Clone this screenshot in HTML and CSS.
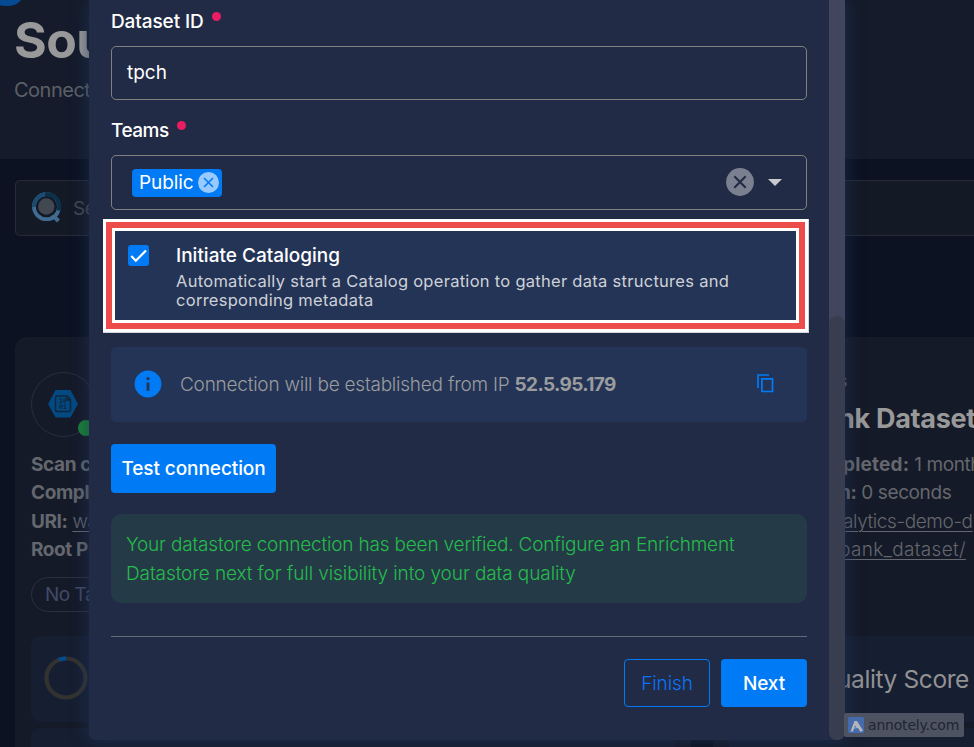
FILE: index.html
```html
<!DOCTYPE html>
<html lang="en">
<head>
<meta charset="utf-8">
<title>Add Datastore</title>
<link rel="stylesheet" href="styles.css">
</head>
<body>
<div class="page">
  <header class="page-header">
    <div class="top-pill"></div>
    <h1>Sou</h1>
    <p class="lead">Connect</p>
  </header>
  <div class="search">
    <svg width="32" height="34" viewBox="0 0 32 34" fill="none">
      <circle cx="14.300" cy="15.500" r="8.200" fill="#414852"/>
      <circle cx="14.500" cy="15.700" r="12.500" stroke="#416b91" stroke-width="3.800"/>
      <path d="M13 3.300A12.500 12.500 0 0 1 26.600 19.500" stroke="#0b3049" stroke-width="4"/>
      <path d="M2 16A12.500 12.500 0 0 1 13 3.300" stroke="#1c4b70" stroke-width="4"/>
      <path d="M19 27l3.500-1 4 4" stroke="#416b91" stroke-width="4"/>
    </svg>
    <span>Se</span>
  </div>
  <main class="cards">
    <article class="card">
      <div class="avatar">
        <svg width="30" height="28" viewBox="0 0 30 28">
          <path d="M7.500 0h15L30 14l-7.500 13.500h-15L0 14z" fill="#034a82"/>
          <path d="M9 6h10l3.500 3.500V19.500q0 2-2 2h-11.500q-1.500 0-1.500-2v-12q0-1.500 1.500-1.500zM19 6v4h4" fill="none" stroke="#12253c" stroke-width="1.400"/>
          <text x="15" y="13.400" class="bits">10</text>
          <text x="15" y="19.300" class="bits">01</text>
        </svg>
        <i class="status"></i>
      </div>
      <div class="facts">
        <div><b>Scan c</b></div>
        <div><b>Compl</b></div>
        <div><b>URI:</b> <u>wa</u></div>
        <div><b>Root P</b></div>
      </div>
      <span class="tag">No Ta</span>
      <div class="stat">
        <svg width="44" height="44" viewBox="0 0 44 44" fill="none">
          <circle cx="22" cy="22" r="19.500" stroke="#323230" stroke-width="4.200"/>
          <path d="M15 3.800A19.500 19.500 0 0 1 22 2.500" stroke="#024b91" stroke-width="4.200"/>
        </svg>
      </div>
      <div class="stat"></div>
    </article>
    <article class="card card-right">
      <div class="kicker">s</div>
      <h2>nk Dataset</h2>
      <div class="facts">
        <div class="f1"><b>pleted:</b> 1 month</div>
        <div class="f2"><b>n:</b> 0 seconds</div>
        <div class="f3"><u>alytics-demo-d</u></div>
        <div class="f4"><u>bank_dataset/</u></div>
      </div>
      <div class="stat score"><span>uality Score</span></div>
      <div class="stat"></div>
    </article>
  </main>
</div>

<div class="modal">
  <form class="modal-body">
    <label class="l1">Dataset ID<i class="req"></i></label>
    <div class="field">tpch</div>
    <label class="l2">Teams<i class="req"></i></label>
    <div class="field select">
      <span class="chip"><span>Public</span>
        <svg width="21" height="21" viewBox="0 0 21 21"><circle cx="10.500" cy="10.500" r="10.500" fill="#99caff"/><path d="M6 6l9 9M15 6l-9 9" stroke="#007bf5" stroke-width="1.600"/></svg>
      </span>
      <svg class="clear" width="28" height="28" viewBox="0 0 28 28"><circle cx="14" cy="14" r="13.900" fill="#7b8091"/><path d="M8.300 8.300l11.400 11.400M19.700 8.300L8.300 19.700" stroke="#222b45" stroke-width="2.100"/></svg>
      <svg class="caret" width="14" height="7" viewBox="0 0 14 7"><path d="M0 0h14L7 7z" fill="#c8cad0"/></svg>
    </div>
    <div class="callout">
      <div class="callout-in">
        <svg width="21" height="21" viewBox="0 0 21 21"><rect width="21" height="21" rx="3" fill="#007bf5"/><path d="M3.300 11l4.500 4.700L18 5.500" fill="none" stroke="#fff" stroke-width="2.200"/></svg>
        <div>
          <div class="opt-title">Initiate Cataloging</div>
          <div class="opt-text">Automatically start a Catalog operation to gather data structures and<br>corresponding metadata</div>
        </div>
      </div>
    </div>
    <div class="info">
      <svg width="28" height="28" viewBox="0 0 28 28"><circle cx="14" cy="14" r="13.400" fill="#007bf5"/><path d="M12.600 7.200h2.800v2.700h-2.800zM12.600 12.500h2.800v8.300h-2.800z" fill="#243456"/></svg>
      <span class="info-text">Connection will be established from IP <b>52.5.95.179</b></span>
      <svg class="copy" width="17" height="19" viewBox="0 0 17 19" fill="none" stroke="#007bf5" stroke-width="1.700"><path d="M12 1H1v13"/><path d="M4.900 4.800h10.600v12.700H4.900z"/></svg>
    </div>
    <button type="button" class="btn test">Test connection</button>
    <div class="success">Your datastore connection has been verified. Configure an Enrichment<br><span class="s2">Datastore next for full visibility into your data quality</span></div>
    <footer>
      <button type="button" class="btn outline">Finish</button>
      <button type="button" class="btn next">Next</button>
    </footer>
  </form>
  <div class="track"><div class="thumb"></div></div>
</div>

<div class="badge">
  <svg width="16" height="16" viewBox="0 0 16 16"><rect width="16" height="16" rx="1.500" fill="#456bac"/><path d="M2.500 14.500L6.500 4h2.500l6 9.500-2.500 1.500-2.500-4-4 .500-1 3z" fill="#b3b5bb"/><path d="M7 8.500l1.500 2-2 .300z" fill="#456bac"/></svg>
  <span>annotely.com</span>
</div>
</body>
</html>
```
FILE: styles.css
```css
* { box-sizing: border-box; }
html, body { height: 100%; }
body {
  margin: 0;
  overflow: hidden;
  position: relative;
  background: #0c1221;
  font-family: Inter, "Liberation Sans", sans-serif;
  font-size: 19px;
  color: #fff;
}
svg { display: block; flex: none; }
h1, h2, p { margin: 0; }

.page { width: 974px; height: 747px; overflow: hidden; }
.page-header { position: relative; height: 159px; padding: 10px 14px; background: #151b2a; }
.top-pill { position: absolute; left: -10px; top: -24px; width: 34px; height: 30px; border-radius: 15px; background: #034a93; }
h1 { font-size: 50px; line-height: 60px; font-weight: 700; color: #999; letter-spacing: -0.6px; }
.lead { margin-top: 9px; font-size: 20px; line-height: 22px; color: #5d6067; letter-spacing: -0.5px; }
.search {
  display: flex; align-items: center; gap: 9px;
  height: 56px; margin: 21px 0 0 15px; padding-left: 16px;
  border: 1px solid #252a36; border-right: 0; border-radius: 5px 0 0 5px;
  background: #141926; color: #45484f; letter-spacing: -0.5px;
}
.cards { display: grid; grid-template-columns: 676px 1fr; gap: 22px; margin: 101px 0 0 15px; }
.card { height: 500px; padding: 35px 16px 0 16px; border-radius: 12px; background: #151a28; }
.card-right { padding-right: 0; overflow: hidden; border-radius: 12px 0 0 12px; }
.avatar {
  position: relative; display: flex; align-items: center; justify-content: center;
  width: 65px; height: 65px; padding: 0 2px 1px 0; border: 1px solid #2a2f3c; border-radius: 50%;
}
.bits { font: 700 6.500px "Liberation Mono", monospace; fill: #12253c; text-anchor: middle; }
.status { position: absolute; left: 46px; top: 47px; width: 16px; height: 16px; border-radius: 50%; background: #1a8036; }
.facts { margin-top: 14px; color: #64676d; line-height: 28.400px; white-space: nowrap; letter-spacing: -0.4px; }
.facts b { font-weight: 700; }
.facts u { font-weight: 300; text-underline-offset: 3px; text-decoration-thickness: 1px; }
.tag {
  display: block; width: 100px; height: 35px; margin-top: 12px; padding-left: 13px;
  border: 1px solid #2a3040; border-radius: 18px;
  color: #424a66; font-size: 19px; line-height: 33px; letter-spacing: -0.5px;
}
.stat { height: 86px; margin: 0 0 6px; padding: 20px 0 0 13px; border-radius: 10px; background: #161e31; }
.card-right .stat { border-radius: 10px 0 0 10px; }
.tag + .stat { margin-top: 24px; }
.kicker { height: 24px; margin-top: -6px; padding-left: 109px; line-height: 30px; color: #64676d; font-size: 18px; }
.card-right h2 { margin: 10px 0 0 109px; height: 38px; line-height: 38px; font-size: 27px; font-weight: 700; color: #999; white-space: nowrap; letter-spacing: -0.3px; }
.card-right .facts { margin: 13px 0 0 114px; }
.facts .f1 b { letter-spacing: 0.2px; }
.facts .f4 { margin-left: -4px; letter-spacing: 0.3px; }
.facts .f2 { margin-left: -4px; }
.score { margin-top: 71px; padding: 28px 0 0 108px; font-size: 24.500px; line-height: 30px; color: #929292; white-space: nowrap; letter-spacing: -0.4px; }

.modal {
  position: absolute; left: 89px; top: 0; width: 756px; height: 740px;
  display: flex; border-radius: 0 0 6px 6px; background: #222b45;
  box-shadow: 0 0 18px rgba(32, 54, 94, .7);
}
.modal-body { width: 740px; padding: 8px 22px 0; display: flex; flex-direction: column; }
.track { width: 16px; height: 740px; padding-top: 316px; background: #41465e; border-radius: 0 0 8px 8px; }
.thumb { height: 424px; border-radius: 8px; background: #383d50; }
label { display: flex; align-items: flex-start; gap: 8px; height: 38px; font-weight: 500; line-height: 27px; letter-spacing: -0.1px; }
.req { width: 9px; height: 9px; margin-top: 4px; border-radius: 50%; background: #ea1c64; }
.field { height: 54px; padding-left: 15px; border: 1px solid #80807f; border-radius: 5px; line-height: 51px; }
.l2 { margin-top: 17px; letter-spacing: -0.5px; }
.select { height: 55px; display: flex; align-items: center; padding-left: 20px; }
.chip { display: flex; align-items: center; justify-content: space-between; width: 90px; height: 28px; padding: 0 3px 0 7px; border-radius: 4px; background: #007bf5; line-height: 30px; letter-spacing: -0.1px; }
.chip svg { margin-top: -1px; }
.clear { margin: -1px 0 0 auto; }
.caret { margin: 0 24px 0 14px; }

.callout { width: 706px; height: 114px; margin: 9px 0 0 -8px; padding: 3px; background: #fff; border: 1px solid #d4d6de; border-width: 0 1px 1px 0; }
.callout-in { height: 107px; border: 6px solid #ec4d4a; background: #243456; display: flex; gap: 27px; padding: 16px; box-shadow: inset 0 0 0 3px #fff; }
.callout-in > svg { margin-top: 1px; }
.opt-title { line-height: 24px; font-weight: 500; }
.opt-text { margin-top: 4px; color: #ced1d8; font-size: 16.500px; line-height: 19px; white-space: nowrap; letter-spacing: 0.280px; }
.info { display: flex; align-items: center; height: 75px; margin-top: 14px; padding: 0 33px 2px 23px; border-radius: 5px; background: #243456; }
.info-text { margin: 1px 0 0 18px; color: #9b9c9e; white-space: nowrap; font-weight: 300; letter-spacing: -0.230px; }
.info-text b { font-weight: 700; letter-spacing: -0.650px; }
.copy { margin-left: auto; }
.btn { height: 49px; padding: 0; border: 0; border-radius: 4px; background: #007bf5; color: #fff; font: 500 19px Inter, "Liberation Sans", sans-serif; white-space: nowrap; letter-spacing: -0.080px; }
.test { width: 165px; margin-top: 22px; }
.success { height: 89px; margin-top: 21px; padding: 17px 15px; border-radius: 10px; background: #243b47; color: #24bb4b; font-weight: 300; line-height: 28.500px; white-space: nowrap; letter-spacing: -0.180px; }
.s2 { letter-spacing: -0.090px; }
footer { display: flex; justify-content: flex-end; gap: 11px; margin-top: 33px; padding-top: 22px; border-top: 1px solid #646b7b; }
footer .btn { width: 86px; height: 48px; }
.outline { background: none; border: 1px solid #007bf5; color: #0a74fa; font-weight: 300; }

.badge {
  position: absolute; left: 844px; top: 713px; width: 120px; height: 24px;
  display: flex; align-items: center; gap: 4px; padding-left: 4px;
  border-radius: 2px; background: #4d5361; color: #202531;
  font: 14px/24px "DejaVu Sans", sans-serif; letter-spacing: -0.200px;
}
```
